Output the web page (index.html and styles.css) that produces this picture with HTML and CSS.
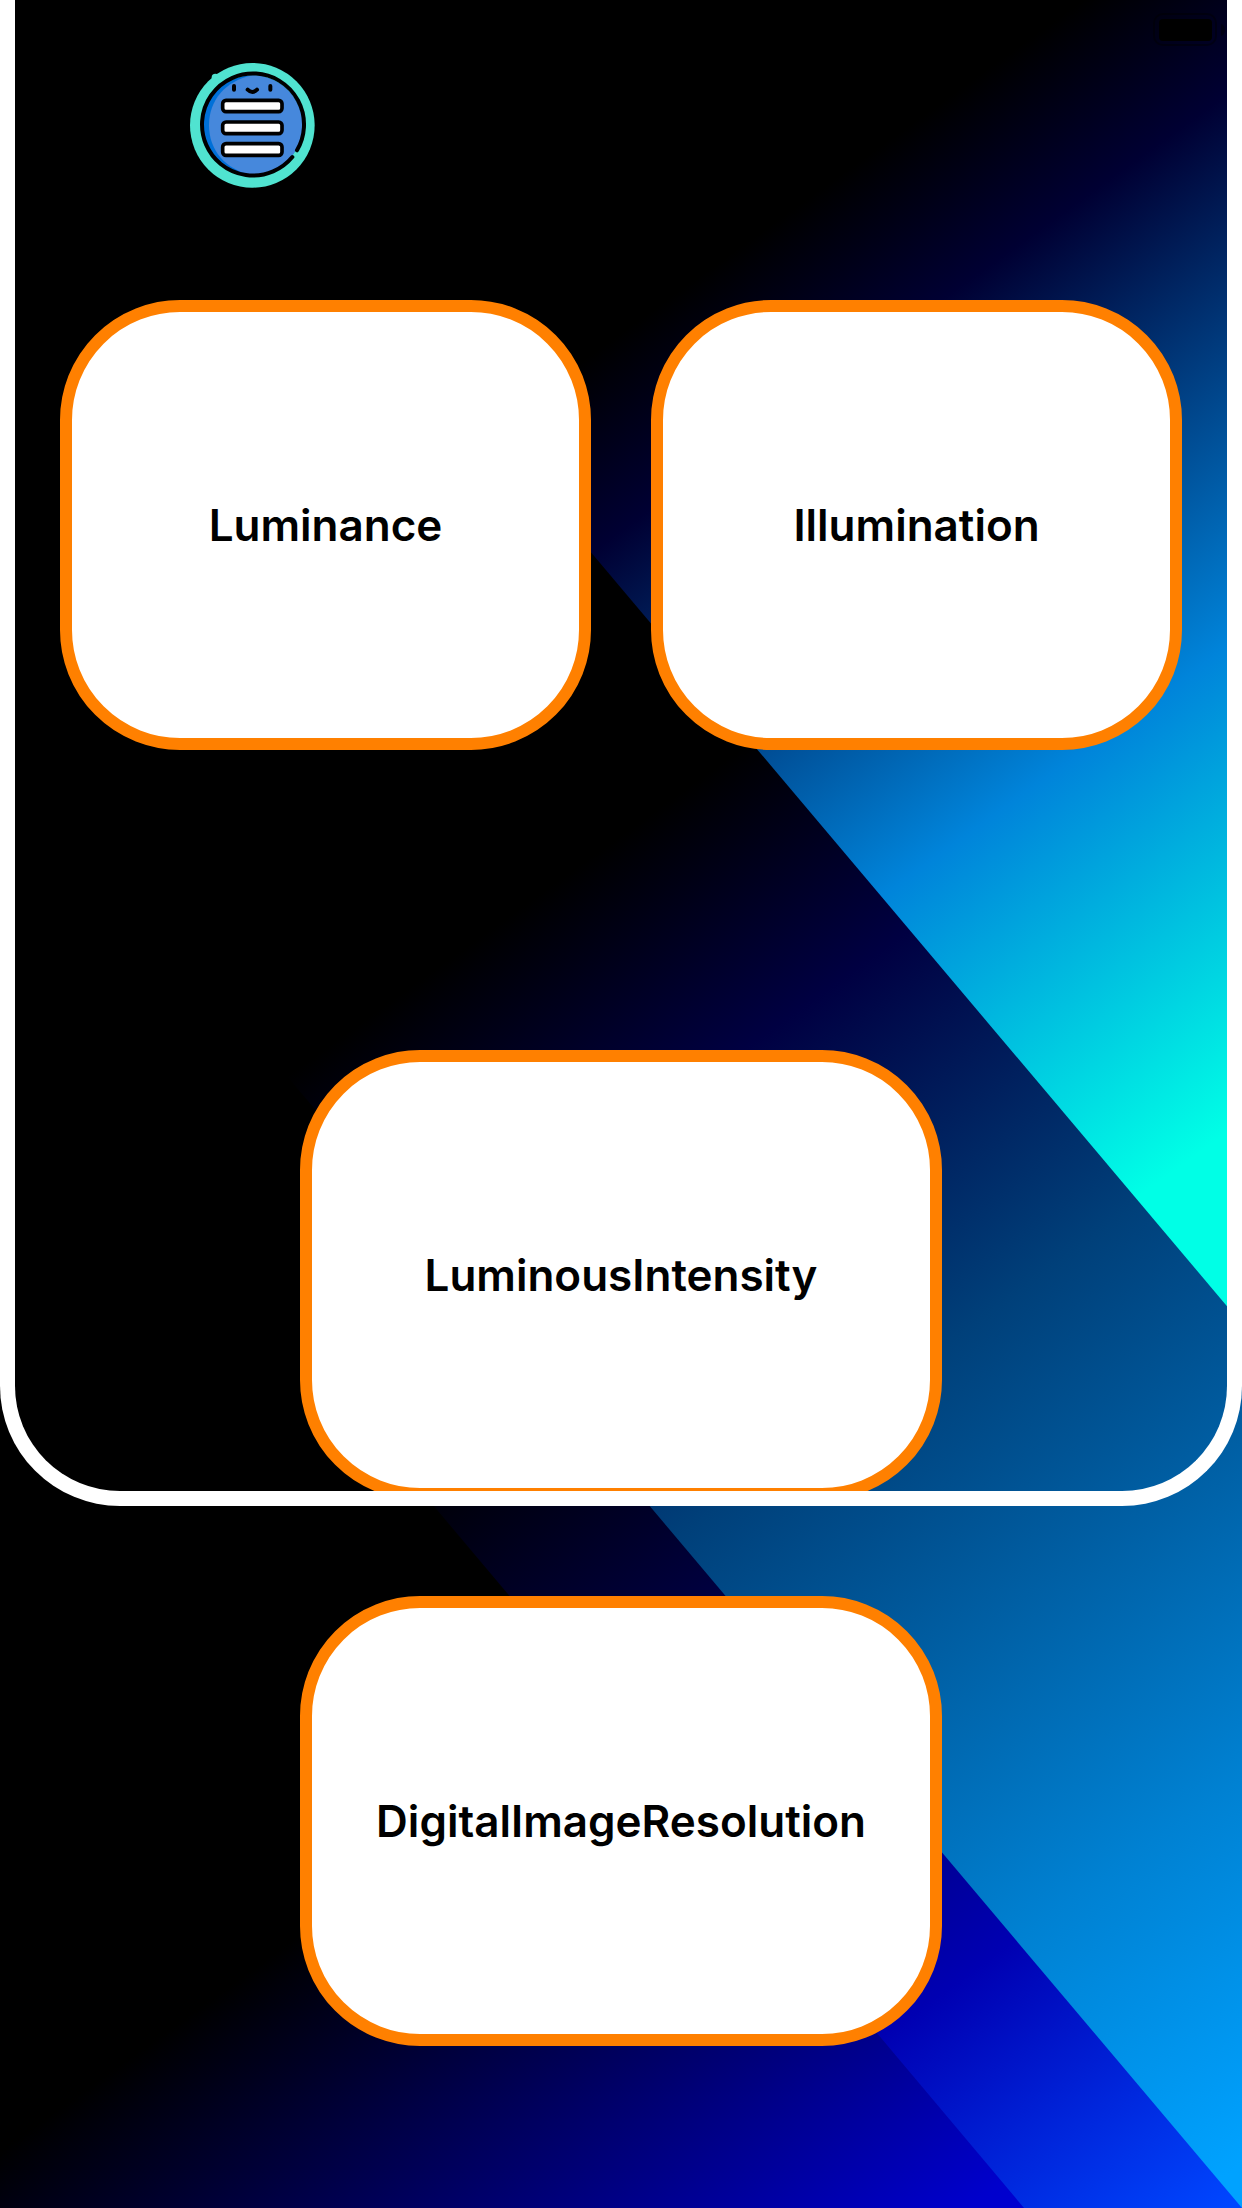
FILE: index.html
```html
<!DOCTYPE html>
<html lang="en">
<head>
<meta charset="utf-8">
<meta name="viewport" content="width=device-width, initial-scale=1">
<title>Light topics</title>
<link rel="stylesheet" href="styles.css">
</head>
<body>
<div class="screen">
  <svg class="backdrop" viewBox="0 0 1242 2208" preserveAspectRatio="none" aria-hidden="true">
    <defs>
      <!-- All bands share one axis, running perpendicular to the 0.72 slope -->
      <linearGradient id="beam" gradientUnits="userSpaceOnUse" x1="0" y1="0" x2="1423" y2="1976">
        <stop offset="0.26" stop-color="#000"/>
        <stop offset="0.326" stop-color="#000033"/>
        <stop offset="0.51" stop-color="#0084da"/>
        <stop offset="0.672" stop-color="#00ffe6"/>
      </linearGradient>
      <linearGradient id="mid" gradientUnits="userSpaceOnUse" x1="0" y1="0" x2="1480" y2="2055">
        <stop offset="0.411" stop-color="#000"/>
        <stop offset="0.508" stop-color="#000042"/>
        <stop offset="0.649" stop-color="#00407a"/>
        <stop offset="0.856" stop-color="#0081d2"/>
        <stop offset="0.98" stop-color="#00a2ff"/>
      </linearGradient>
      <linearGradient id="ribbon" gradientUnits="userSpaceOnUse" x1="0" y1="0" x2="1480" y2="2055">
        <stop offset="0.565" stop-color="#000"/>
        <stop offset="0.679" stop-color="#000042"/>
        <stop offset="0.856" stop-color="#0000b2"/>
        <stop offset="0.99" stop-color="#0046ff"/>
      </linearGradient>
      <linearGradient id="deep" gradientUnits="userSpaceOnUse" x1="0" y1="0" x2="1423" y2="1976">
        <stop offset="0.717" stop-color="#000"/>
        <stop offset="0.968" stop-color="#0000cc"/>
        <stop offset="1" stop-color="#0000d8"/>
      </linearGradient>
    </defs>
    <rect width="1242" height="2208" fill="url(#beam)"/>
    <path d="M109 -19 1242 1324V2208H0V-19Z" fill="url(#mid)"/>
    <path d="M0 736 1242 2208H0Z" fill="url(#ribbon)"/>
    <path d="M0 990 1024 2208H0Z" fill="url(#deep)"/>
  </svg>

  <section class="panel">
    <header class="topbar">
      <button class="menu" type="button" aria-label="Menu">
        <svg viewBox="29 38 375 375" aria-hidden="true">
          <circle cx="216" cy="225" r="187" fill="#50e3d0"/>
          <circle cx="105" cy="81" r="11" fill="#50e3d0"/>
          <circle cx="216" cy="225" r="150" fill="#0070d8"/>
          <path d="M216 75a150 150 0 0 1 0 300C135 358 86 300 86 225S135 92 216 75Z" fill="#4688dc"/>
          <path d="M336 320A153 153 0 1 1 350 300" fill="none" stroke="#000" stroke-width="12" stroke-linecap="round"/>
          <g fill="#fff" stroke="#000" stroke-width="11">
            <rect x="127" y="150" width="178" height="34" rx="10"/>
            <rect x="127" y="215" width="178" height="35" rx="10"/>
            <rect x="127" y="280" width="178" height="35" rx="10"/>
          </g>
          <path d="M161 107v11M270 107v11M202 118q14 14 28 0" fill="none" stroke="#000" stroke-width="12" stroke-linecap="round"/>
        </svg>
      </button>
      <svg class="battery" viewBox="0 0 74 34" aria-hidden="true">
        <rect x="1" y="1" width="62" height="31" rx="9" fill="none" stroke="#000" stroke-opacity=".4" stroke-width="2"/>
        <rect x="6" y="6" width="53" height="22" rx="4"/>
        <path d="M68 11q4 1 4 6t-4 6z" fill-opacity=".4"/>
      </svg>
    </header>
    <div class="pair">
      <button class="card" type="button">Luminance</button>
      <button class="card" type="button">Illumination</button>
    </div>
    <div class="single tucked">
      <button class="card" type="button">LuminousIntensity</button>
    </div>
  </section>

  <div class="single lower">
    <button class="card" type="button">DigitalImageResolution</button>
  </div>
</div>
</body>
</html>
```
FILE: styles.css
```css
* {
  box-sizing: border-box;
}

body {
  margin: 0;
  background: #000;
  font-family: Inter, "Liberation Sans", sans-serif;
}

.screen {
  position: relative;
  isolation: isolate;
  min-height: 100vh;
}

.backdrop {
  position: absolute;
  inset: 0;
  z-index: -1;
  display: block;
  width: 100%;
  height: 100%;
}

.panel {
  overflow: hidden;
  border: 15px solid #fff;
  border-top: 0;
  border-radius: 0 0 120px 120px;
}

.topbar {
  display: flex;
  justify-content: space-between;
  align-items: flex-start;
  height: 300px;
  padding-left: 175px;
}

.menu {
  width: 125px;
  height: 125px;
  margin-top: 63px;
  padding: 0;
  border: 0;
  border-radius: 50%;
  background: none;
}

.menu svg {
  display: block;
  width: 100%;
  height: 100%;
}

.battery {
  width: 74px;
  height: 34px;
  margin-top: 13px;
}

.pair {
  display: grid;
  grid-template-columns: 1fr 1fr;
  gap: 60px;
  padding: 0 45px;
}

.single {
  display: grid;
  padding: 0 300px;
}

/* The card runs slightly under the panel's lower edge */
.tucked {
  margin: 300px 0 -9px;
  padding: 0 285px;
}

.lower {
  padding-top: 90px;
}

.card {
  height: 450px;
  padding: 0;
  border: 12px solid #ff8000;
  border-radius: 120px;
  background: #fff;
  color: #000;
  font: inherit;
  font-size: 44px;
  font-weight: 600;
  line-height: 54px;
}
```
